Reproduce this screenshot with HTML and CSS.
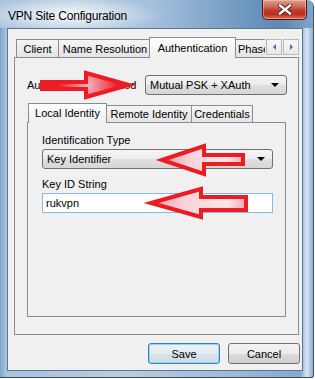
FILE: index.html
```html
<!DOCTYPE html>
<html lang="en">
<head>
    <meta charset="UTF-8">
    <title>VPN Site Configuration</title>
    <link rel="stylesheet" href="styles.css">
</head>
<body>
    <div class="window">
        <!-- title bar -->
        <div class="titlebar">
            <span class="title">VPN Site Configuration</span>
            <div class="close-btn">
                <svg width="14" height="11" viewBox="0 0 14 11">
                    <path d="M2 1.5 L12 9.5 M12 1.5 L2 9.5" stroke="#3a1a14" stroke-width="4.2" stroke-linecap="square"/>
                    <path d="M2 1.5 L12 9.5 M12 1.5 L2 9.5" stroke="#ffffff" stroke-width="2.4" stroke-linecap="square"/>
                </svg>
            </div>
        </div>

        <div class="client">
            <div class="tabs outer">
                <div class="tabstrip">
                    <div class="tab t-client">Client</div>
                    <div class="tab t-names">Name Resolution</div>
                    <div class="tab active t-auth">Authentication</div>
                    <div class="tab t-phase">Phase 1</div>
                    <div class="spin">
                        <span class="spin-btn"><i class="tri left"></i></span>
                        <span class="spin-btn"><i class="tri right"></i></span>
                    </div>
                </div>
                <div class="panel outer-panel">
                    <div class="method-row">
                        <span class="label">Authentication Method</span>
                        <div class="combo method">Mutual PSK + XAuth<span class="caret"></span></div>
                    </div>

                    <div class="tabs inner">
                        <div class="tabstrip small">
                            <div class="tab active t-local">Local Identity</div>
                            <div class="tab t-remote">Remote Identity</div>
                            <div class="tab t-cred">Credentials</div>
                        </div>
                        <div class="panel inner-panel">
                            <div class="label field-label">Identification Type</div>
                            <div class="combo">Key Identifier<span class="caret"></span></div>
                            <div class="label field-label second">Key ID String</div>
                            <div class="textbox">rukvpn</div>
                        </div>
                    </div>
                </div>
            </div>

            <div class="buttons">
                <div class="btn default">Save</div>
                <div class="btn">Cancel</div>
            </div>
        </div>
    </div>

    <!-- red annotation arrows drawn over the dialog -->
    <svg class="marks" width="315" height="379" viewBox="0 0 315 379">
        <defs>
            <radialGradient id="glow1" cx="88" cy="85" r="30" gradientUnits="userSpaceOnUse">
                <stop offset="0" stop-color="#f4b7bf"/>
                <stop offset="1" stop-color="#ec1c24"/>
            </radialGradient>
            <linearGradient id="pale" x1="0" y1="0" x2="1" y2="0">
                <stop offset="0" stop-color="#f39aa4"/>
                <stop offset="0.35" stop-color="#f8d3d8"/>
                <stop offset="0.8" stop-color="#fbe6e9"/>
                <stop offset="1" stop-color="#f5a9b1"/>
            </linearGradient>
        </defs>
        <polygon points="42,82 86,82 86,73 129,85 86,97 86,89 42,89" fill="url(#glow1)" stroke="#ec1c24" stroke-width="4" stroke-linejoin="miter"/>
        <polygon points="162,160 204,146 204,155 243,155 243,164 204,164 204,174" fill="url(#pale)" stroke="#ec1c24" stroke-width="4" stroke-linejoin="miter"/>
        <polygon points="151,203 201,189 201,197 246,197 246,210 201,210 201,217" fill="url(#pale)" stroke="#ec1c24" stroke-width="4" stroke-linejoin="miter"/>
    </svg>
</body>
</html>
```

FILE: styles.css
```css
/* page */
body {
    margin: 0;
    background: #ffffff;
    font-family: "Liberation Sans", Arial, sans-serif;
    font-size: 11px;
    color: #000;
}

/* glass window frame */
.window {
    width: 314px;
    height: 378px;
    box-sizing: border-box;
    display: flex;
    flex-direction: column;
    padding: 0 10px 6px 7px;
    border-right: 1px solid #3d4f63;
    border-bottom: 1px solid #3d4f63;
    border-top-right-radius: 7px;
    border-bottom-right-radius: 3px;
    background: linear-gradient(to right, #7ea3c9 0, #a8c3de 2%, #b8cde2 40%, #9db9d6 75%, #86a9cd 96%, #d8e6f3 98%, #8fb0d1 100%);
}

.titlebar {
    height: 28px;
    margin: 0 -10px 0 -7px;
    padding-left: 8px;
    display: flex;
    align-items: flex-start;
    border-top-right-radius: 7px;
    background:
        radial-gradient(ellipse 95px 17px at 68px 15px, rgba(255,255,255,0.85), rgba(255,255,255,0) 100%),
        linear-gradient(to right, #aac3dc 0%, #bcd0e4 25%, #a3bedb 50%, #6f98c0 78%, #5d88b2 90%, #7fa5ca 100%);
}

.title {
    margin-top: 9px;
    font-size: 12px;
    letter-spacing: -0.2px;
    color: #000;
}

.close-btn {
    margin-left: auto;
    margin-right: 6px;
    width: 45px;
    height: 20px;
    box-sizing: border-box;
    display: flex;
    align-items: center;
    justify-content: center;
    border: 1px solid #4a1a12;
    border-top: none;
    border-radius: 0 0 5px 5px;
    box-shadow: inset 0 0 0 1px rgba(255,210,200,0.45);
    background: linear-gradient(#dba08f 0%, #cf6a52 35%, #c0392a 55%, #b8301e 75%, #e0704f 100%);
}

/* client area */
.client {
    flex: 1;
    display: flex;
    flex-direction: column;
    padding: 8px 2px 0 6px;
    background: #f0f0f0;
    border: 1px solid #5e7590;
}

/* tab controls */
.tabs.outer {
    width: 285px;
}

.tabstrip {
    height: 20px;
    display: flex;
    align-items: flex-end;
    padding-left: 2px;
}

.tab {
    height: 18px;
    box-sizing: border-box;
    padding-top: 3px;
    text-align: center;
    white-space: nowrap;
    border: 1px solid #898c95;
    border-bottom: none;
    background: linear-gradient(#f5f5f5, #e4e4e4);
}

.tab.active {
    position: relative;
    z-index: 1;
    height: 21px;
    margin-bottom: -1px;
    padding-top: 4px;
    background: linear-gradient(#ffffff, #f4f4f4 60%, #f0f0f0);
}

.t-client { width: 43px; }
.t-names { width: 94px; margin-left: -1px; }
.t-auth { width: 87px; margin-left: -3px; margin-right: -3px; }
.t-phase {
    width: 32px;
    overflow: hidden;
    text-align: left;
    padding-left: 4px;
    border-right: none;
}

.spin {
    align-self: flex-start;
    margin-top: 2px;
    margin-left: 1px;
    display: flex;
    gap: 1px;
}

.spin-btn {
    width: 16px;
    height: 16px;
    box-sizing: border-box;
    display: flex;
    align-items: center;
    justify-content: center;
    border: 1px solid #b9b9b9;
    background: linear-gradient(#f7f7f7, #e8e8e8);
}

.tri {
    width: 0;
    height: 0;
    border-top: 3px solid transparent;
    border-bottom: 3px solid transparent;
}

.tri.left { border-right: 3px solid #3f6fa8; }
.tri.right { border-left: 3px solid #3f6fa8; }

.panel {
    box-sizing: border-box;
    border: 1px solid #898c95;
    background: #f0f0f0;
}

.outer-panel {
    height: 278px;
    padding: 17px 11px 0 12px;
}

.method-row {
    height: 20px;
    display: flex;
    align-items: center;
    justify-content: space-between;
}

/* combo boxes */
.combo {
    position: relative;
    height: 20px;
    box-sizing: border-box;
    padding: 3px 0 0 4px;
    border: 1px solid #707070;
    border-radius: 3px;
    background: linear-gradient(#f4f4f4 0%, #ececec 50%, #e0e0e0 51%, #d6d6d6 100%);
    white-space: nowrap;
}

.combo.method {
    width: 142px;
}

.caret {
    position: absolute;
    right: 7px;
    top: 7px;
    width: 0;
    height: 0;
    border-left: 4px solid transparent;
    border-right: 4px solid transparent;
    border-top: 4px solid #000;
}

/* inner tab control */
.tabs.inner {
    width: 259px;
    margin-top: 8px;
}

.tabstrip.small {
    height: 19px;
    padding-left: 1px;
}

.tabstrip.small .tab {
    height: 17px;
    padding-top: 2px;
}

.tabstrip.small .tab.active {
    height: 20px;
    padding-top: 3px;
}

.t-local { width: 79px; margin-right: -1px; }
.t-remote { width: 86px; }
.t-cred { width: 62px; margin-left: -1px; }

.inner-panel {
    height: 195px;
    padding: 11px 12px 0 14px;
}

.field-label {
    display: block;
    line-height: 13px;
    margin-bottom: 2px;
}

.field-label.second {
    margin-top: 9px;
}

.textbox {
    height: 20px;
    box-sizing: border-box;
    padding: 3px 0 0 3px;
    border: 1px solid #8cb7e0;
    background: #ffffff;
}

/* dialog buttons */
.buttons {
    display: flex;
    justify-content: flex-end;
    gap: 8px;
    margin-top: 8px;
}

.btn {
    width: 72px;
    height: 21px;
    box-sizing: border-box;
    padding-top: 4px;
    text-align: center;
    border: 1px solid #707070;
    border-radius: 3px;
    background: linear-gradient(#f2f2f2 0%, #ebebeb 50%, #dddddd 51%, #cfcfcf 100%);
}

.btn.default {
    border-color: #3c7fb1;
    box-shadow: inset 0 0 0 1px #8fd6f8;
    background: linear-gradient(#eef4f8 0%, #e3ebf2 50%, #d6e1ea 51%, #cfdbe6 100%);
}

/* annotation overlay */
.marks {
    position: absolute;
    top: 0;
    left: 0;
    pointer-events: none;
}
```
